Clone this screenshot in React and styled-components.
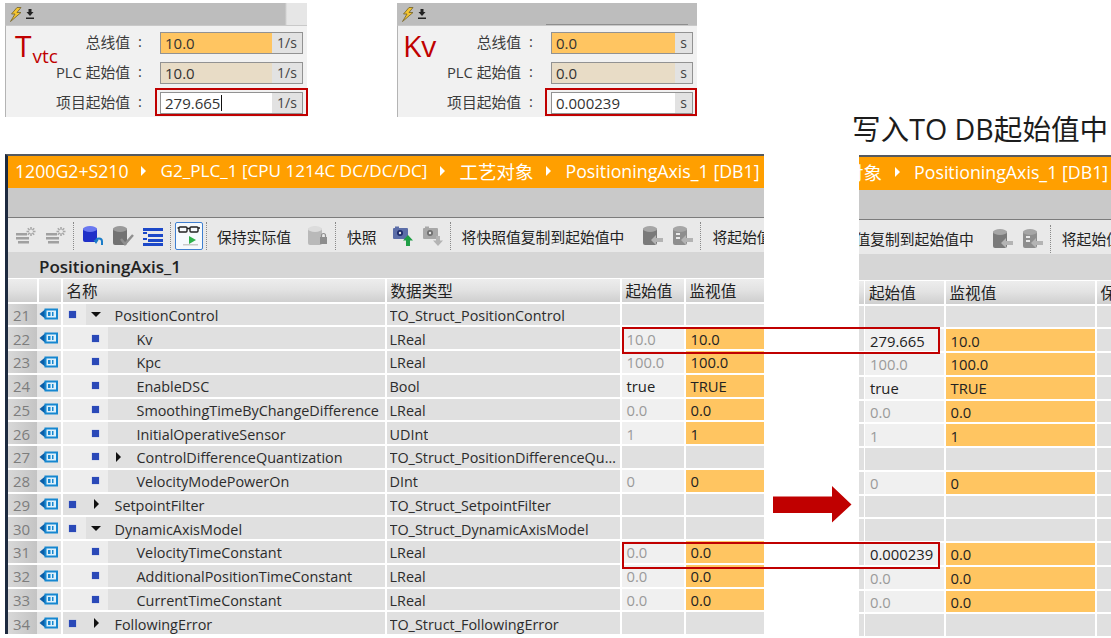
import React from 'react';
import styled, { createGlobalStyle } from 'styled-components';

const Global = createGlobalStyle`
  html, body { margin: 0; padding: 0; background: #fff; overflow: hidden; }
  body { font-family: "Open Sans", "Noto Sans CJK SC", sans-serif; }
`;

const Canvas = styled.div`
  position: relative;
  width: 1111px;
  height: 638px;
  background: #fff;
  overflow: hidden;
`;

/* ---------- pasted clippings ---------- */

const FormClip = styled.section`
  position: absolute;
  left: ${p => p.$x}px;
  top: 3px;
  width: ${p => p.$w}px;
  height: 114px;
  display: flex;
  flex-direction: column;
  background: #f1f1f1;
`;

const FormHead = styled.div`
  position: relative;
  height: 22px;
  flex: none;
  display: flex;
  align-items: center;
  gap: 2px;
  padding-left: 4px;
  background: ${p => p.$short ? 'linear-gradient(90deg, #bdbdbd 0, #bdbdbd 280px, #e6e6e6 282px)' : '#bdbdbd'};
`;

const HeadRule = styled.div`
  position: absolute;
  left: 149px;
  right: 9px;
  bottom: 0;
  height: 1px;
  background: #8e8e8e;
`;

const FormBody = styled.div`
  flex: 1;
  display: flex;
  flex-direction: column;
  gap: 8px;
  padding: 5px 4px 0 0;
  border-left: 1px solid #b4b4b4;
  border-top: 1px solid #c9c9c9;
`;

const FormRow = styled.div`
  display: grid;
  grid-template-columns: ${p => p.$label}px 1fr;
  height: 22px;
  align-items: center;
`;

const FormLabel = styled.div`
  display: flex;
  justify-content: flex-end;
  padding: 0 18px 2px 0;
  font-size: 14.8px;
  color: #3c3c3c;
  gap: 8px;
`;

const Field = styled.div`
  display: flex;
  height: 22px;
  box-sizing: border-box;
  border: 1.5px solid #929292;
  font-size: 15px;
  color: #333;
`;

const FieldValue = styled.div`
  flex: 1;
  display: flex;
  align-items: center;
  padding-left: 4px;
  background: ${p => p.$bg};
`;

const Caret = styled.span`
  display: inline-block;
  width: 1px;
  height: 16px;
  margin-left: 1px;
  background: #111;
`;

const FieldUnit = styled.div`
  width: ${p => p.$w}px;
  flex: none;
  display: flex;
  align-items: center;
  justify-content: center;
  background: #e2e2e2;
  font-size: 14px;
  color: #444;
`;

/* ---------- TIA table ---------- */

const Panel = styled.section`
  position: absolute;
  left: ${p => p.$x}px;
  top: ${p => p.$y}px;
  width: ${p => p.$w}px;
  height: ${p => p.$h}px;
  display: flex;
  flex-direction: column;
  overflow: hidden;
  box-sizing: border-box;
  border-top: 2px solid #555a60;
  border-left: ${p => p.$edge ? '3px solid #1d2a3f' : 'none'};
  background: #fff;
`;

const Shift = styled.div`
  margin-left: ${p => p.$by}px;
  width: 500px;
  height: 100%;
`;

const Crumb = styled.div`
  height: 33px;
  background: #ff9f00;
`;

const CrumbTrail = styled.div`
  display: flex;
  align-items: center;
  box-sizing: border-box;
  height: 100%;
  padding: 0 0 3px 7px;
  gap: 12.5px;
  color: #fff;
  white-space: nowrap;
`;

const CrumbText = styled.span`
  font-size: ${p => p.$size}px;
`;

const CrumbArrow = styled.span`
  display: inline-flex;
  margin-right: 2px;
`;

const Grey = styled.div`
  height: 30px;
  background: #c9c9c9;
  border-bottom: 1px solid #7c7c7c;
`;

const Bar = styled.div`
  height: 34px;
  background: #e9e9e9;
`;

const BarInner = styled.div`
  display: flex;
  align-items: center;
  box-sizing: border-box;
  height: 100%;
  padding: 3px 0 0 7px;
  white-space: nowrap;
`;

const Tool = styled.span`
  display: inline-flex;
  width: 22px;
  height: 22px;
  margin-right: ${p => p.$mr ?? 8}px;
  flex: none;
`;

const Sep = styled.span`
  width: 0;
  height: 28px;
  border-left: 1px dotted #8a8a8a;
  margin-right: ${p => p.$r ?? 8}px;
  flex: none;
`;

const BarText = styled.span`
  font-size: 14.8px;
  color: #222;
  margin: ${p => p.$m};
`;

const ActiveTool = styled.span`
  display: inline-flex;
  box-sizing: border-box;
  width: 28px;
  height: 28px;
  border: 1px solid #3f7fd0;
  border-radius: 2px;
  background: #f6fafd;
  margin-right: 3px;
  flex: none;
`;

const TitleBand = styled.div`
  height: 26px;
  box-sizing: border-box;
  background: #d6d6d6;
  display: flex;
  align-items: center;
  padding: 3px 0 0 31px;
  font-size: 17px;
  font-weight: 600;
  color: #222;
`;

const Table = styled.div`
  display: flex;
  flex-direction: column;
  gap: 2px;
  background: #fff;
  padding-top: 1px;
`;

const Row = styled.div`
  display: grid;
  grid-template-columns: ${p => p.$cols};
  column-gap: 1.5px;
  height: ${p => p.$h ?? 21.75}px;
  flex: none;
`;

const HeadCell = styled.div`
  display: flex;
  align-items: center;
  padding-left: 4px;
  overflow: hidden;
  font-size: 15.6px;
  white-space: nowrap;
  color: #222;
  background: linear-gradient(180deg, #ededed 0%, #e3e3e3 45%, #cfcfcf 100%);
`;

const NumCell = styled.div`
  display: flex;
  align-items: center;
  padding: 1px 0 0 5px;
  font-size: 15px;
  color: #7d7d7d;
  background: linear-gradient(90deg, #d8d8d8, #c4c4c4);
`;

const TagCell = styled.div`
  display: flex;
  align-items: center;
  justify-content: center;
  margin-left: -1.5px;
  background: #e4e4e4;
`;

const NameCell = styled.div`
  display: flex;
  background: #e0e0e0;
  font-size: 14.4px;
  color: #2c2c2c;
`;

const Lead = styled.div`
  width: ${p => p.$depth ? 45 : 23}px;
  flex: none;
  display: flex;
  align-items: center;
  padding-left: ${p => p.$depth ? 29 : 6}px;
  box-sizing: border-box;
  background: ${p => p.$tone};
`;

const Marker = styled.span`
  width: 7px;
  height: 7px;
  background: #2a49b8;
  box-shadow: 0 0 1px #7f93d8;
`;

const Twist = styled.div`
  width: 29px;
  flex: none;
  box-sizing: border-box;
  padding-right: 8px;
  display: flex;
  align-items: center;
  justify-content: center;
`;

const Name = styled.span`
  align-self: center;
  padding-top: 2px;
  white-space: nowrap;
`;

const TextCell = styled.div`
  display: flex;
  align-items: center;
  padding: 2px 0 0 3px;
  min-width: 0;
  font-size: 14.4px;
  color: #2c2c2c;
  background: #e0e0e0;
`;

const Clip = styled.span`
  overflow: hidden;
  white-space: nowrap;
  text-overflow: ellipsis;
`;

const ValueCell = styled.div`
  display: flex;
  align-items: center;
  padding: 1px 0 0 5px;
  font-size: 14.8px;
  color: ${p => p.$dim ? '#9a9a9a' : '#222'};
  background: ${p => p.$empty ? '#e0e0e0' : '#f0f0f0'};
`;

const WatchCell = styled.div`
  display: flex;
  align-items: center;
  padding: 1px 0 0 5px;
  font-size: 14.8px;
  color: #222;
  background: ${p => p.$empty ? '#e0e0e0' : '#ffc561'};
`;

const TailCell = styled.div`
  background: #e0e0e0;
`;

/* ---------- annotations on top ---------- */

const Heading = styled.div`
  position: absolute;
  left: 852px;
  top: 110px;
  font-size: 28.6px;
  line-height: 38px;
  color: #1c1c1c;
  white-space: nowrap;
`;

const RedMark = styled.div`
  position: absolute;
  left: ${p => p.$x}px;
  top: ${p => p.$y}px;
  width: ${p => p.$w}px;
  height: ${p => p.$h}px;
  box-sizing: border-box;
  border: 2px solid #c00000;
`;

const RedLabel = styled.div`
  position: absolute;
  left: ${p => p.$x}px;
  top: 24px;
  font-size: 30px;
  line-height: 44px;
  color: #c00000;
  white-space: nowrap;
`;

const Sub = styled.span`
  font-size: 19px;
  position: relative;
  top: 6px;
  left: 1px;
`;

const ArrowWrap = styled.svg`
  position: absolute;
  left: 773px;
  top: 486px;
`;

/* ---------- drawings ---------- */

const Bolt = () => (
  <svg width="14" height="15" viewBox="0 0 14 15">
    <path d="M8 0.5 L2.5 7 L6 7 L1.5 14.5 L12 5.5 L8 5.5 L12 0.5 Z" fill="#f4c430" stroke="#7a6a30" strokeWidth="0.9" />
  </svg>
);

const Down = () => (
  <svg width="10" height="12" viewBox="0 0 10 12">
    <path d="M5 8 L1.5 4 H3.5 V1 H6.5 V4 H8.5 Z" fill="#222" />
    <rect x="1" y="9.5" width="8" height="1.5" fill="#222" />
  </svg>
);

const Tag = () => (
  <svg width="20" height="14" viewBox="0 0 20 14">
    <path d="M0.5 7 L6 2.5 V11.5 Z" fill="#0a5ea8" />
    <rect x="5.5" y="1.5" width="13.5" height="11" fill="#1687d0" />
    <rect x="7.5" y="3.5" width="9.5" height="7" fill="#dff1fb" />
    <rect x="9" y="5" width="2.5" height="4" fill="#1687d0" />
    <rect x="13" y="5" width="1.5" height="4" fill="#1687d0" />
  </svg>
);

const TriDown = () => (
  <svg width="10" height="5" viewBox="0 0 10 5"><path d="M0 0 H10 L5 5 Z" fill="#111" /></svg>
);

const TriRight = () => (
  <svg width="5" height="10" viewBox="0 0 5 10"><path d="M0 0 L5 5 L0 10 Z" fill="#111" /></svg>
);

const Chevron = () => (
  <CrumbArrow>
    <svg width="5" height="10" viewBox="0 0 5 10"><path d="M0 0 L5 5 L0 10 Z" fill="#fff" /></svg>
  </CrumbArrow>
);

const GearList = () => (
  <svg width="22" height="22" viewBox="0 0 22 22">
    <g fill="#a0a0a0">
      <rect x="1" y="8" width="11" height="2.5" />
      <rect x="1" y="12" width="13" height="2.5" />
      <rect x="3" y="16" width="11" height="2.5" />
    </g>
    <g stroke="#a8a8a8" strokeWidth="1.6">
      <path d="M16 2 V11 M11.5 6.5 H20.5 M12.8 3.3 L19.2 9.7 M19.2 3.3 L12.8 9.7" />
    </g>
    <circle cx="16" cy="6.5" r="2" fill="#e9e9e9" />
  </svg>
);

const Cylinder = ({ body = '#8a8a8a', top = '#bdbdbd', h = 17, w = 14 }) => (
  <g>
    <rect x="1" y="3" width={w} height={h - 3} rx="2" fill={body} />
    <ellipse cx={1 + w / 2} cy="4" rx={w / 2} ry="3" fill={top} />
  </g>
);

const DbUndo = () => (
  <svg width="22" height="22" viewBox="0 0 22 22">
    <Cylinder body="#2030c8" top="#6a78f0" />
    <path d="M20 20 V16.5 A3 3 0 0 0 14 16.5" fill="none" stroke="#1a7cc8" strokeWidth="2" />
    <path d="M11.5 15 H16.5 L14 19 Z" fill="#1a7cc8" />
  </svg>
);

const DbCheck = () => (
  <svg width="22" height="22" viewBox="0 0 22 22">
    <Cylinder body="#727272" top="#9a9a9a" h={20} />
    <path d="M9 14 L13 19 L21 10" fill="none" stroke="#8f8f8f" strokeWidth="2.5" />
  </svg>
);

const TreeList = () => (
  <svg width="22" height="22" viewBox="0 0 22 22">
    <g fill="#1c48c8">
      <rect x="1" y="3" width="20" height="3" />
      <rect x="1" y="7" width="4" height="2" />
      <rect x="6" y="9" width="15" height="3" />
      <rect x="1" y="13" width="4" height="2" />
      <rect x="6" y="14" width="15" height="3" />
      <rect x="1" y="18" width="20" height="3" />
    </g>
  </svg>
);

const Glasses = () => (
  <svg width="26" height="26" viewBox="0 0 26 26">
    <g fill="none" stroke="#222" strokeWidth="1.4">
      <rect x="3" y="4" width="8" height="5" rx="1" />
      <rect x="14" y="4" width="8" height="5" rx="1" />
      <path d="M11 5.5 H14 M3 5 H1.5 M22 5 H24" />
    </g>
    <path d="M13 13 L20 17 L13 21 Z" fill="#2fb24c" />
    <rect x="7" y="21" width="15" height="1.5" fill="#c9c9c9" />
  </svg>
);

const DbLock = () => (
  <svg width="22" height="22" viewBox="0 0 22 22">
    <Cylinder body="#b9b9b9" top="#dcdcdc" h={20} />
    <rect x="13" y="12" width="7" height="7" fill="#8d8d8d" />
    <path d="M14.5 12 V10.5 A2 2 0 0 1 18.5 10.5 V12" fill="none" stroke="#8d8d8d" strokeWidth="1.2" />
  </svg>
);

const Camera = ({ on }) => (
  <svg width="22" height="22" viewBox="0 0 22 22">
    <rect x="1" y="3" width="15" height="11" rx="1" fill={on ? '#5c6ea8' : '#a8a8a8'} />
    <rect x="3" y="1.5" width="4" height="2" fill={on ? '#5c6ea8' : '#a8a8a8'} />
    <circle cx="8" cy="8" r="3" fill={on ? '#1d2a6a' : '#6f6f6f'} />
    <circle cx="8" cy="8" r="1.2" fill="#e9e9e9" />
    {on
      ? <path d="M16 10 L21 15.5 H18 V21 H14 V15.5 H11 Z" fill="#1f9e46" />
      : <path d="M16 21 L21 15.5 H18 V11 H14 V15.5 H11 Z" fill="#b4b4b4" />}
  </svg>
);

const DbArrow = ({ dots }) => (
  <svg width="22" height="22" viewBox="0 0 22 22">
    <Cylinder body={dots ? '#8e8e8e' : '#7a7a7a'} top="#a6a6a6" h={20} />
    {dots && <path d="M4 9 H8 M4 13 H8" stroke="#e9e9e9" strokeWidth="2" />}
    <path d="M9 15 L14 10 V13 H21 V17 H14 V20 Z" fill="#b4b4b4" />
  </svg>
);

/* ---------- data ---------- */

const rows = [
  [21, 0, 'down', 'PositionControl', 'TO_Struct_PositionControl', null, null],
  [22, 1, null, 'Kv', 'LReal', '10.0', '10.0', '279.665'],
  [23, 1, null, 'Kpc', 'LReal', '100.0', '100.0'],
  [24, 1, null, 'EnableDSC', 'Bool', 'true', 'TRUE'],
  [25, 1, null, 'SmoothingTimeByChangeDifference', 'LReal', '0.0', '0.0'],
  [26, 1, null, 'InitialOperativeSensor', 'UDInt', '1', '1'],
  [27, 1, 'right', 'ControlDifferenceQuantization', 'TO_Struct_PositionDifferenceQuantization', null, null],
  [28, 1, null, 'VelocityModePowerOn', 'DInt', '0', '0'],
  [29, 0, 'right', 'SetpointFilter', 'TO_Struct_SetpointFilter', null, null],
  [30, 0, 'down', 'DynamicAxisModel', 'TO_Struct_DynamicAxisModel', null, null],
  [31, 1, null, 'VelocityTimeConstant', 'LReal', '0.0', '0.0', '0.000239'],
  [32, 1, null, 'AdditionalPositionTimeConstant', 'LReal', '0.0', '0.0'],
  [33, 1, null, 'CurrentTimeConstant', 'LReal', '0.0', '0.0'],
  [34, 0, 'right', 'FollowingError', 'TO_Struct_FollowingError', null, null],
];

const leftCols = '29px 22.5px 322.5px 233.5px 62.5px 1fr';
const rightCols = '4.5px 79px 149.5px 1fr';

const Form = ({ x, w, label, unit, unitW, short, values, typed, caret, rule }) => (
  <FormClip $x={x} $w={w}>
    <FormHead $short={short}>
      <Bolt /><Down />
      {rule && <HeadRule />}
    </FormHead>
    <FormBody>
      <FormRow $label={label}>
        <FormLabel><span>总线值</span><span>:</span></FormLabel>
        <Field>
          <FieldValue $bg="#ffc561">{values}</FieldValue>
          <FieldUnit $w={unitW}>{unit}</FieldUnit>
        </Field>
      </FormRow>
      <FormRow $label={label}>
        <FormLabel><span>PLC 起始值</span><span>:</span></FormLabel>
        <Field>
          <FieldValue $bg="#e8dcc6">{values}</FieldValue>
          <FieldUnit $w={unitW}>{unit}</FieldUnit>
        </Field>
      </FormRow>
      <FormRow $label={label}>
        <FormLabel><span>项目起始值</span><span>:</span></FormLabel>
        <Field>
          <FieldValue $bg="#fff">{typed}{caret && <Caret />}</FieldValue>
          <FieldUnit $w={unitW}>{unit}</FieldUnit>
        </Field>
      </FormRow>
    </FormBody>
  </FormClip>
);

// the right clipping only shows the end of the same breadcrumb and toolbar
const TrailEnd = () => (
  <>
    <CrumbText $size={18.5}>工艺对象</CrumbText><Chevron />
    <CrumbText $size={17.8}>PositioningAxis_1 [DB1]</CrumbText>
  </>
);

const ToolsEnd = () => (
  <>
    <BarText $m="0 18px 0 11px">将快照值复制到起始值中</BarText>
    <Tool><DbArrow /></Tool>
    <Tool $mr={6}><DbArrow dots /></Tool>
    <Sep $r={0} />
    <BarText $m="0 0 0 11px">将起始值加载为实际值</BarText>
  </>
);

const nameTone = (depth, twist) => {
  if (depth) return '#ededed';
  return twist === 'down' ? '#ebebeb' : '#e0e0e0';
};

export default function App() {
  return (
    <Canvas>
      <Global />

      <Form x={5} w={302} label={154} unit="1/s" unitW={30} short values="10.0" typed="279.665" caret />
      <Form x={397} w={300} label={153} unit="s" unitW={17} rule values="0.0" typed="0.000239" />
      <RedLabel $x={15}>T<Sub>vtc</Sub></RedLabel>
      <RedLabel $x={403}>Kv</RedLabel>
      <RedMark $x={155} $y={88} $w={153} $h={28} />
      <RedMark $x={545} $y={88} $w={152} $h={28} />

      <Heading>写入TO DB起始值中</Heading>

      <Panel $x={5} $y={154} $w={759} $h={480} $edge>
        <Crumb>
          <CrumbTrail>
            <CrumbText $size={17.7}>1200G2+S210</CrumbText><Chevron />
            <CrumbText $size={17.1}>G2_PLC_1 [CPU 1214C DC/DC/DC]</CrumbText><Chevron />
            <TrailEnd />
          </CrumbTrail>
        </Crumb>
        <Grey />
        <Bar>
          <BarInner>
            <Tool><GearList /></Tool>
            <Tool $mr={6}><GearList /></Tool>
            <Sep />
            <Tool><DbUndo /></Tool>
            <Tool><DbCheck /></Tool>
            <Tool $mr={6}><TreeList /></Tool>
            <Sep $r={4} />
            <ActiveTool><Glasses /></ActiveTool>
            <Sep $r={0} />
            <BarText $m="0 16px 0 10px">保持实际值</BarText>
            <Tool $mr={6}><DbLock /></Tool>
            <Sep $r={0} />
            <BarText $m="0 15px 0 11px">快照</BarText>
            <Tool><Camera on /></Tool>
            <Tool $mr={6}><Camera /></Tool>
            <Sep $r={0} />
            <ToolsEnd />
          </BarInner>
        </Bar>
        <TitleBand>PositioningAxis_1</TitleBand>
        <Table>
          <Row $cols={leftCols} $h={23}>
            <HeadCell />
            <HeadCell />
            <HeadCell>名称</HeadCell>
            <HeadCell>数据类型</HeadCell>
            <HeadCell>起始值</HeadCell>
            <HeadCell>监视值</HeadCell>
          </Row>
          {rows.map(([num, depth, twist, name, type, start, watch]) => (
            <Row key={num} $cols={leftCols}>
              <NumCell>{num}</NumCell>
              <TagCell><Tag /></TagCell>
              <NameCell>
                <Lead $depth={depth} $tone={nameTone(depth, twist)}><Marker /></Lead>
                <Twist>
                  {twist === 'down' && <TriDown />}
                  {twist === 'right' && <TriRight />}
                </Twist>
                <Name>{name}</Name>
              </NameCell>
              <TextCell><Clip>{type}</Clip></TextCell>
              <ValueCell $empty={!start} $dim={start !== 'true'}>{start}</ValueCell>
              <WatchCell $empty={!watch}>{watch}</WatchCell>
            </Row>
          ))}
        </Table>
      </Panel>

      <Panel $x={859} $y={155} $w={252} $h={481}>
        <Crumb><Shift $by={-58}><CrumbTrail><TrailEnd /></CrumbTrail></Shift></Crumb>
        <Grey />
        <Bar><Shift $by={-66}><BarInner><ToolsEnd /></BarInner></Shift></Bar>
        <TitleBand />
        <Table>
          <Row $cols={rightCols} $h={23}>
            <HeadCell />
            <HeadCell>起始值</HeadCell>
            <HeadCell>监视值</HeadCell>
            <HeadCell>保持</HeadCell>
          </Row>
          {rows.map(([num, , , , , start, watch, written]) => (
            <Row key={num} $cols={rightCols}>
              <TailCell />
              <ValueCell $empty={!start} $dim={!written && start !== 'true'}>{written || start}</ValueCell>
              <WatchCell $empty={!watch}>{watch}</WatchCell>
              <TailCell />
            </Row>
          ))}
        </Table>
      </Panel>

      <RedMark $x={622} $y={327} $w={318} $h={27} />
      <RedMark $x={622} $y={542} $w={318} $h={27} />

      <ArrowWrap width="79" height="37" viewBox="0 0 79 37">
        <path d="M0 10.5 H59 V0 L78.5 18.5 L59 36.5 V27 H0 Z" fill="#c00000" />
      </ArrowWrap>
    </Canvas>
  );
}
